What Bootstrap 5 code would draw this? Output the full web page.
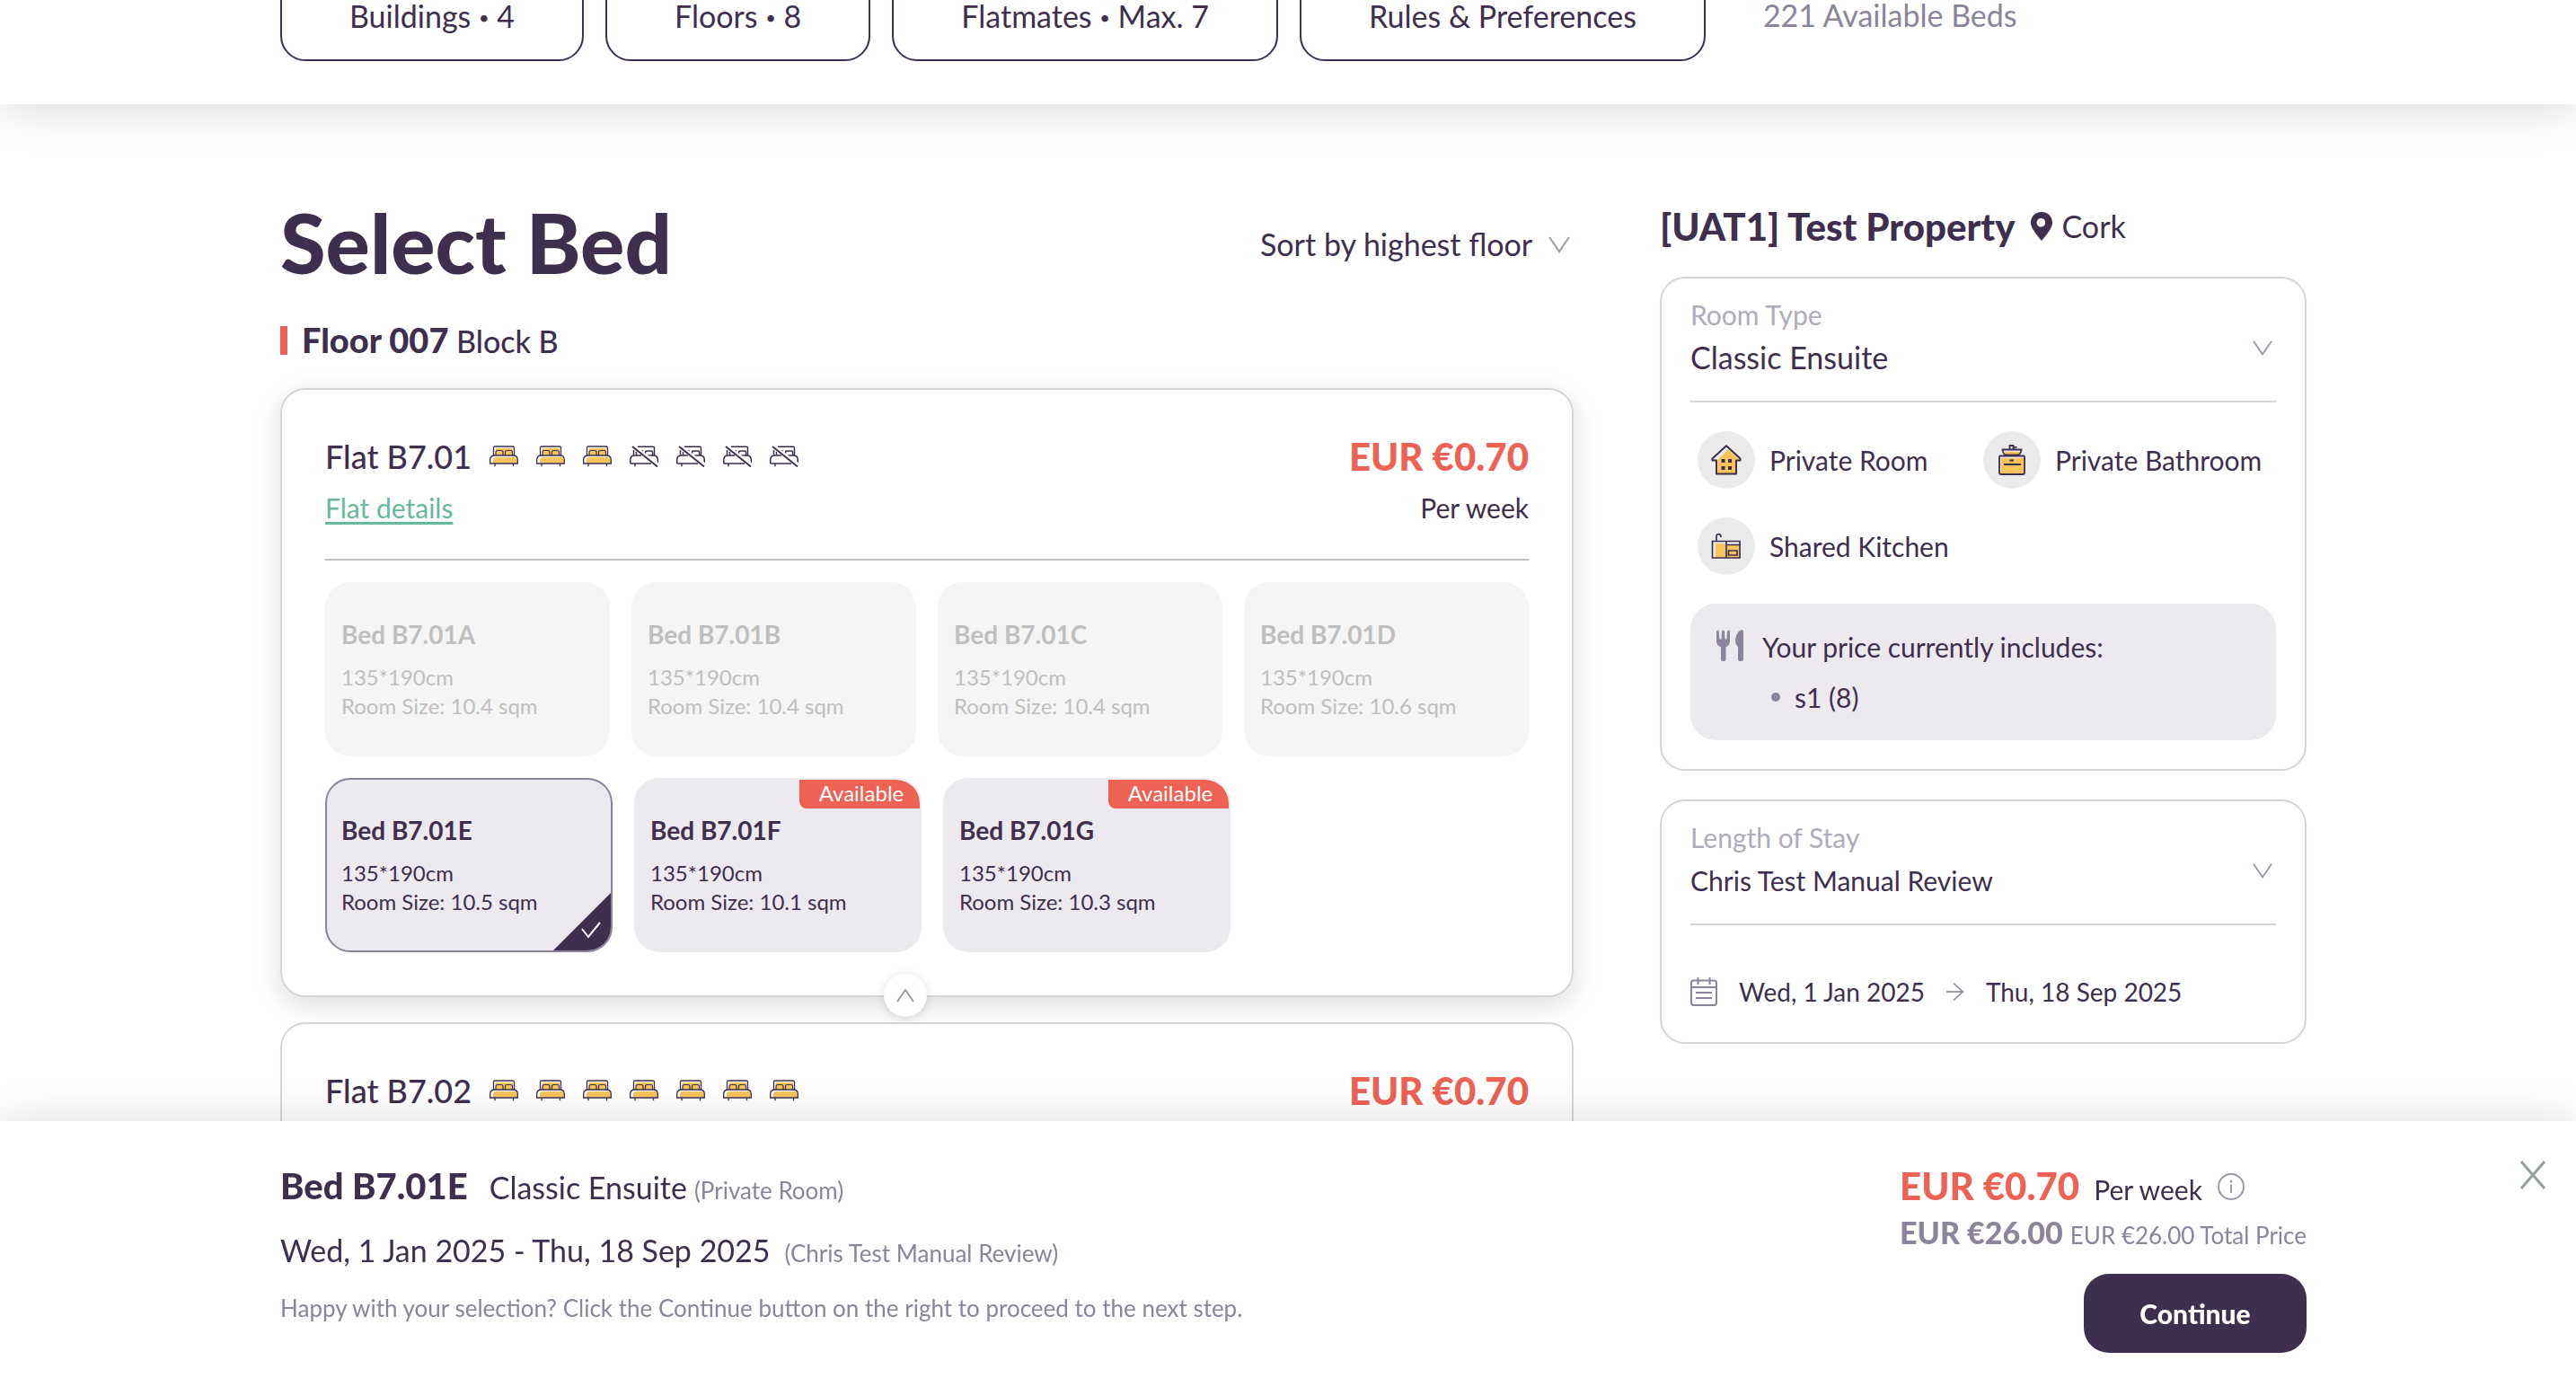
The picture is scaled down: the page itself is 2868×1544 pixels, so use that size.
<!DOCTYPE html>
<html lang="en">
<head>
<meta charset="utf-8">
<meta name="viewport" content="width=device-width, initial-scale=1">
<title>Select Bed</title>
<link href="https://cdn.jsdelivr.net/npm/bootstrap@5.3.0/dist/css/bootstrap.min.css" rel="stylesheet">
<style>
  :root { --ink: #3e2f4f; --muted: #8b849a; --faint: #b0abb8; --line: #d6d5dc; --coral: #ed6254; --lilac: #eceaee; --green: #66b99d; }
  body { font-family: Lato, "Liberation Sans", sans-serif; color: var(--ink); background: #fff; font-size: 30px; line-height: 40px; }
  h1, h2, h3, p { margin: 0; line-height: inherit; }
  button, select, label { color: inherit; }
  .gutters { padding-left: 312px; padding-right: 300px; }

  .filter-bar { padding-bottom: 48px; box-shadow: 0 0 56px rgba(0, 0, 0, .18); font-size: 34px; }
  .filter-row { margin-top: -34px; gap: 24px; }
  .filter-btn { height: 102px; padding: 0 75px; border: 2px solid var(--ink); border-radius: 28px; font-size: 34px; color: var(--ink); }
  .pip { font-size: 20px; vertical-align: 4px; }
  .beds-left { padding-left: 40px; color: var(--muted); }

  .page-body { padding-top: 106px; gap: 96px; }
  .side-col { flex: 0 0 720px; padding-top: 6px; }
  .page-title { font-size: 92px; line-height: 96px; font-weight: 900; }
  .heavy { font-weight: 900; }
  .plain-select { appearance: none; border: 0; background: none; padding: 0; color: var(--ink); outline-offset: 4px; }
  .t-34 { font-size: 34px; }
  .t-28 { font-size: 28px; }
  .t-26 { font-size: 26px; line-height: 32px; }
  .t-40 { font-size: 40px; line-height: 48px; }
  .t-42 { font-size: 42px; line-height: 48px; }
  .ink-muted { color: var(--muted); }
  .ink-faint { color: var(--faint); }
  .ink-coral { color: var(--coral); }

  .floor-head { margin: 41px 0 33px; gap: 16px; height: 40px; }
  .floor-mark { width: 8px; height: 32px; background: var(--coral); }
  .t-36 { font-size: 36px; }
  .t-38 { font-size: 38px; }

  .panel { border: 2px solid var(--line); border-radius: 28px; background: #fff; }
  .flat-panel { padding: 50px 48px 48px; margin-bottom: 28px; position: relative; }
  .flat-panel.is-open { box-shadow: 0 8px 32px rgba(0, 0, 0, .14); }
  .flat-top { gap: 20px; line-height: 48px; }
  .flat-sub { margin: 13px 0 37px; }
  .green-link, .green-link:hover { color: var(--green); text-underline-offset: 4px; }
  .rule { height: 2px; margin: 0; border: 0; opacity: 1; background: var(--line); }
  .rule-dark { background: #c1c0c6; margin-bottom: 24px; }
  .bed-row { gap: 24px; }
  .bed-row + .bed-row { margin-top: 24px; }
  .bed-tile { position: relative; flex: 1 1 0; min-height: 194px; padding: 38px 16px 0; border: 2px solid transparent; border-radius: 28px; background: var(--lilac); text-align: left; font-size: 24px; line-height: 32px; overflow: hidden; display: flex; flex-direction: column; }
  .bed-tile strong { font-size: 28px; line-height: 36px; margin-bottom: 14px; }
  .bed-tile:disabled { background: #f5f5f5; color: #bfbfbf; }
  .bed-tile.open-tile { flex: 0 0 320px; }
  .bed-tile.picked { border-color: var(--muted); }
  .picked-corner { position: absolute; right: 0; bottom: 0; }
  .tile-tag { position: absolute; right: 0; top: 0; width: 134px; height: 32px; line-height: 30px; padding-left: 4px; border-radius: 0 26px 0 8px; background: var(--coral); color: #fff; text-align: center; }
  .fold-btn { position: absolute; left: calc(50% - 48px); bottom: -24px; width: 48px; height: 48px; padding: 0; border: 0; border-radius: 50%; background: #fff; box-shadow: 0 2px 12px rgba(0, 0, 0, .15); }

  .side-title { margin-bottom: 32px; }
  .side-panel { padding: 20px 32px 32px; }
  .side-panel + .side-panel { margin-top: 32px; padding-bottom: 36px; }
  .picker { padding: 0 4px 24px 0; }
  .picker label { margin-bottom: 4px; display: block; }
  .picker select { line-height: 48px; height: 48px; width: 100%; }
  .feature-grid { padding: 32px 8px; row-gap: 32px; }
  .feature { gap: 16px; width: 50%; white-space: nowrap; }
  .feature-dot { width: 64px; height: 64px; border-radius: 50%; background: #ebebec; }
  .price-box { border-radius: 28px; background: var(--lilac); padding: 28px; gap: 20px; }
  .price-list li { gap: 16px; padding-left: 10px; margin-top: 16px; }
  .price-list li::before { content: ""; width: 10px; height: 10px; border-radius: 50%; background: var(--muted); }
  .dates { margin-top: 54px; }

  .summary-bar { background: #fff; padding-top: 48px; padding-bottom: 38px; box-shadow: 0 0 48px rgba(0, 0, 0, .14); }
  .stack-24 { gap: 24px; }
  .stay-line { line-height: 48px; }
  .per-week { line-height: 32px; }
  .continue-btn { width: 248px; height: 88px; margin-top: 18px; border-radius: 28px; background: var(--ink); color: #fff; font-size: 30px; font-weight: 900; }
  .continue-btn:hover { background: #55446a; color: #fff; }
  .close-btn { position: absolute; right: 32px; top: 44px; padding: 0; border: 0; background: none; line-height: 0; }
  svg { display: block; flex: none; }
</style>
</head>
<body>
<svg width="0" height="0" class="position-absolute" aria-hidden="true">
  <symbol id="bed" viewBox="0 0 32 24">
    <path d="M4.5 11V2.500Q4.500 1 6 1H26Q27.500 1 27.500 2.500V11" fill="#fff" stroke="#3e2f4f" stroke-width="1.300"/>
    <path d="M7 3H26V11H7Z" fill="#f6c458"/>
    <path d="M7 11V7.500Q7 5.500 9 5.500H13Q15 5.500 15 7.500V11M17.500 11V7.500Q17.500 5.500 19.500 5.500H23.500Q25.500 5.500 25.500 7.500V11" fill="#f6c458" stroke="#3e2f4f" stroke-width="1.200"/>
    <path d="M.7 20V15.500C1 12.500 3 11 5.500 11H26.500C29 11 31 12.500 31.300 15.500V20Z" fill="#fff"/>
    <path d="M4 19.500V16Q4 13.500 7 13H29Q31 14 31 16V19.500Z" fill="#f6c458"/>
    <path d="M.7 20V15.500C1 12.500 3 11 5.500 11H26.500C29 11 31 12.500 31.300 15.500V20ZM6 20V23.200M26.500 20V23.200" fill="none" stroke="#3e2f4f" stroke-width="1.300"/>
  </symbol>
  <symbol id="nobed" viewBox="0 0 32 24">
    <path d="M4.500 11V5M9 1.200H26Q27.500 1.200 27.500 2.500V11M7.500 11V7M17.500 9V7.500Q17.500 6 19.500 6H23.500Q25.500 6 25.500 7.500V11M12 6H15M.8 20V15.500C1 12.500 3 11 5.500 11H13M20 11H26.500C29 11 31 12.500 31.300 15.500V20M.8 20H24M6 20V23.200" fill="none" stroke="#3e2f4f" stroke-width="1.500"/>
    <path d="M5 .5 32 20.500" stroke="#fff" stroke-width="2"/>
    <path d="M3 1 31 23.500" stroke="#3e2f4f" stroke-width="1.900"/>
  </symbol>
  <symbol id="down" viewBox="0 0 24 24"><path d="M1 4 12 20 23 4" fill="none" stroke="#9d97a9" stroke-width="2"/></symbol>
</svg>

<header class="filter-bar gutters">
  <div class="filter-row d-flex align-items-center">
    <button type="button" class="btn filter-btn">Buildings <span class="pip">•</span> 4</button>
    <button type="button" class="btn filter-btn">Floors <span class="pip">•</span> 8</button>
    <button type="button" class="btn filter-btn">Flatmates <span class="pip">•</span> Max. 7</button>
    <button type="button" class="btn filter-btn">Rules &amp; Preferences</button>
    <span class="beds-left">221 Available Beds</span>
  </div>
</header>

<main class="page-body gutters d-flex align-items-start">
  <section class="flex-fill">
    <div class="d-flex justify-content-between align-items-center">
      <h1 class="page-title">Select Bed</h1>
      <div class="d-flex align-items-center gap-3 pe-1 pt-1">
        <select class="plain-select t-34" aria-label="Sort beds"><option>Sort by highest floor</option></select>
        <svg width="24" height="24"><use href="#down"/></svg>
      </div>
    </div>

    <div class="floor-head d-flex align-items-center">
      <span class="floor-mark"></span>
      <h2 class="t-34"><strong class="t-38 heavy">Floor 007</strong> Block B</h2>
    </div>

    <article class="panel flat-panel is-open">
      <div class="flat-top d-flex align-items-center">
        <h3 class="t-36">Flat B7.01</h3>
        <svg width="32" height="24"><use href="#bed"/></svg>
        <svg width="32" height="24"><use href="#bed"/></svg>
        <svg width="32" height="24"><use href="#bed"/></svg>
        <svg width="32" height="24"><use href="#nobed"/></svg>
        <svg width="32" height="24"><use href="#nobed"/></svg>
        <svg width="32" height="24"><use href="#nobed"/></svg>
        <svg width="32" height="24"><use href="#nobed"/></svg>
        <strong class="t-42 heavy ink-coral ms-auto">EUR €0.70</strong>
      </div>
      <div class="flat-sub d-flex justify-content-between">
        <a href="#" class="green-link">Flat details</a>
        <span>Per week</span>
      </div>
      <hr class="rule rule-dark">
      <div class="bed-row d-flex">
        <button type="button" class="bed-tile" disabled><strong>Bed B7.01A</strong><span>135*190cm</span><span>Room Size: 10.4 sqm</span></button>
        <button type="button" class="bed-tile" disabled><strong>Bed B7.01B</strong><span>135*190cm</span><span>Room Size: 10.4 sqm</span></button>
        <button type="button" class="bed-tile" disabled><strong>Bed B7.01C</strong><span>135*190cm</span><span>Room Size: 10.4 sqm</span></button>
        <button type="button" class="bed-tile" disabled><strong>Bed B7.01D</strong><span>135*190cm</span><span>Room Size: 10.6 sqm</span></button>
      </div>
      <div class="bed-row d-flex">
        <button type="button" class="bed-tile open-tile picked" aria-pressed="true"><strong>Bed B7.01E</strong><span>135*190cm</span><span>Room Size: 10.5 sqm</span>
          <svg class="picked-corner" width="64" height="64" viewBox="0 0 64 64"><path d="M64 0V64H0Z" fill="#3e2f4f"/><path d="M32 40 39 49 52 33" fill="none" stroke="#fff" stroke-width="2"/></svg>
        </button>
        <button type="button" class="bed-tile open-tile"><strong>Bed B7.01F</strong><span>135*190cm</span><span>Room Size: 10.1 sqm</span><span class="tile-tag">Available</span></button>
        <button type="button" class="bed-tile open-tile"><strong>Bed B7.01G</strong><span>135*190cm</span><span>Room Size: 10.3 sqm</span><span class="tile-tag">Available</span></button>
      </div>
      <button type="button" class="fold-btn d-flex align-items-center justify-content-center" aria-label="Collapse flat">
        <svg width="22" height="16" viewBox="0 0 22 16"><path d="M2 15 11 2 20 15" fill="none" stroke="#9d97a9" stroke-width="2"/></svg>
      </button>
    </article>

    <article class="panel flat-panel">
      <div class="flat-top d-flex align-items-center">
        <h3 class="t-36">Flat B7.02</h3>
        <svg width="32" height="24"><use href="#bed"/></svg>
        <svg width="32" height="24"><use href="#bed"/></svg>
        <svg width="32" height="24"><use href="#bed"/></svg>
        <svg width="32" height="24"><use href="#bed"/></svg>
        <svg width="32" height="24"><use href="#bed"/></svg>
        <svg width="32" height="24"><use href="#bed"/></svg>
        <svg width="32" height="24"><use href="#bed"/></svg>
        <strong class="t-42 heavy ink-coral ms-auto">EUR €0.70</strong>
      </div>
    </article>
  </section>

  <aside class="side-col">
    <div class="side-title d-flex align-items-center">
      <h2 class="t-42 heavy">[UAT1] Test Property</h2>
      <svg class="ms-3 me-2" width="28" height="32" viewBox="0 0 28 32"><path d="M14 0C6.500 0 2 5.200 2 12 2 18 9 26 14 32 19 26 26 18 26 12 26 5.200 21.500 0 14 0ZM14 16.500A4.800 4.800 0 1 1 14 7 4.800 4.800 0 0 1 14 16.500Z" fill="#3e2f4f"/></svg>
      <span class="t-34">Cork</span>
    </div>

    <section class="panel side-panel">
      <div class="picker d-flex align-items-end">
        <div class="flex-fill">
          <label for="roomType" class="ink-faint">Room Type</label>
          <select id="roomType" class="plain-select t-34"><option>Classic Ensuite</option></select>
        </div>
        <svg class="mb-4" width="22" height="22"><use href="#down"/></svg>
      </div>
      <hr class="rule">
      <div class="feature-grid d-flex flex-wrap">
        <div class="feature d-flex align-items-center">
          <span class="feature-dot d-flex align-items-center justify-content-center">
            <svg width="34" height="34" viewBox="0 0 34 34"><path d="M17 1 1.500 15.500V17.500H6V33H28V17.500H32.500V15.500Z" fill="#ebebec"/><path d="M19 5 7.500 17V32.500H27.500V17.500H32Z" fill="#f6c458"/><path d="M17 1.200 1.500 15.500V17.500H6V32.500H28V17.500H32.500V15.500Z" fill="none" stroke="#3e2f4f" stroke-width="2" stroke-linejoin="round"/><path d="M11.500 16H15.500V20H11.500ZM19 16H23V20H19ZM11.500 24H15.500V28H11.500ZM19 24H23V28H19Z" fill="#3e2f4f"/></svg>
          </span>
          <span>Private Room</span>
        </div>
        <div class="feature d-flex align-items-center">
          <span class="feature-dot d-flex align-items-center justify-content-center">
            <svg width="32" height="34" viewBox="0 0 32 34"><path d="M4 15H30V32H4Z" fill="#f6c458"/><path d="M8 8H26L23 11H9Z" fill="#f6c458"/><path d="M3 12.500H29Q30 12.500 30 14V31Q30 33 28 33H4Q2 33 2 31V14Q2 12.500 3 12.500ZM5.500 5.500H26.500Q26 11 22 11.500H10Q6 11 5.500 5.500ZM13.500 5V1H17.500V5M17.500 2.800H21.500M7 22H26M13.500 17.500H18" fill="none" stroke="#3e2f4f" stroke-width="1.800"/></svg>
          </span>
          <span>Private Bathroom</span>
        </div>
        <div class="feature d-flex align-items-center">
          <span class="feature-dot d-flex align-items-center justify-content-center">
            <svg width="34" height="30" viewBox="0 0 34 30"><path d="M5 12H16V28H5ZM18 14H31V28H18Z" fill="#f6c458"/><path d="M1.500 9.500H32V28H1.500ZM17 9.500V28M17 13.500H32M19.500 20H29V25H19.500ZM6 9V4Q6 1.500 8.500 1.500T11 5" fill="none" stroke="#3e2f4f" stroke-width="1.700"/></svg>
          </span>
          <span>Shared Kitchen</span>
        </div>
      </div>
      <div class="price-box d-flex align-items-start">
        <svg width="32" height="38" viewBox="0 0 32 38"><path d="M1 3Q1 1.500 2.300 1.500T3.800 3L4.300 11.500H6.500L7 3Q7 1.500 8.500 1.500T10 3L10.500 11.500H12.500L13 3Q13.200 1.500 14.500 1.500T16 3V14Q16 18 11.500 20.500V34Q11.500 36 8.700 36T6 34V20.500Q1 18 1 14ZM31 3Q31 1 29 1.200C25 2 22 8 22 14Q22 17 25 20.500V34Q25 36 28 36T31 34Z" fill="#8b849a"/></svg>
        <div>
          <p>Your price currently includes:</p>
          <ul class="price-list list-unstyled mb-0"><li class="d-flex align-items-center">s1 (8)</li></ul>
        </div>
      </div>
    </section>

    <section class="panel side-panel">
      <div class="picker d-flex align-items-end">
        <div class="flex-fill">
          <label for="stay" class="ink-faint">Length of Stay</label>
          <select id="stay" class="plain-select"><option>Chris Test Manual Review</option></select>
        </div>
        <svg class="mb-4" width="22" height="22"><use href="#down"/></svg>
      </div>
      <hr class="rule">
      <div class="dates d-flex align-items-center t-28">
        <svg class="me-4" width="30" height="32" viewBox="0 0 30 32"><path d="M4 3.500H26Q29 3.500 29 6V28Q29 31 26 31H4Q1 31 1 28V6Q1 3.500 4 3.500ZM1 11H29M8.500 0V8M21.500 0V8M6 17H24M6 23H24" fill="none" stroke="#8b849a" stroke-width="2"/></svg>
        <span>Wed, 1 Jan 2025</span>
        <svg class="mx-4" width="20" height="20" viewBox="0 0 20 20"><path d="M0 10H18M8 .5 18.500 10 8 19.500" fill="none" stroke="#9d97a9" stroke-width="1.800"/></svg>
        <span>Thu, 18 Sep 2025</span>
      </div>
    </section>
  </aside>
</main>

<footer class="summary-bar gutters fixed-bottom d-flex justify-content-between align-items-start">
  <div class="d-flex flex-column stack-24">
    <div class="d-flex align-items-baseline">
      <strong class="t-40 heavy me-4">Bed B7.01E</strong>
      <span class="t-34 me-2">Classic Ensuite</span>
      <span class="t-26 ink-muted">(Private Room)</span>
    </div>
    <div class="stay-line d-flex align-items-baseline gap-3 t-34">
      <span>Wed, 1 Jan 2025 - Thu, 18 Sep 2025</span>
      <span class="t-26 ink-muted">(Chris Test Manual Review)</span>
    </div>
    <p class="t-26 ink-muted">Happy with your selection? Click the Continue button on the right to proceed to the next step.</p>
  </div>
  <div class="d-flex flex-column gap-2">
    <div class="d-flex align-items-baseline">
      <strong class="t-42 heavy ink-coral me-3">EUR €0.70</strong>
      <span class="per-week me-3">Per week</span>
      <svg class="align-self-center" width="32" height="32" viewBox="0 0 32 32"><circle cx="16" cy="17" r="14" fill="none" stroke="#9d97a9" stroke-width="2"/><path d="M16 14.500V24" stroke="#9d97a9" stroke-width="2"/><circle cx="16" cy="11" r="1.500" fill="#9d97a9"/></svg>
    </div>
    <div class="d-flex align-items-baseline gap-2 ink-muted">
      <strong class="t-34 heavy">EUR €26.00</strong>
      <span class="t-26">EUR €26.00 Total Price</span>
    </div>
    <button type="button" class="btn continue-btn align-self-end">Continue</button>
  </div>
  <button type="button" class="close-btn" aria-label="Close">
    <svg width="32" height="32" viewBox="0 0 32 32"><path d="M3 1 29 31M29 1 3 31" stroke="#97a09f" stroke-width="3"/></svg>
  </button>
</footer>
<script src="https://cdn.jsdelivr.net/npm/bootstrap@5.3.0/dist/js/bootstrap.bundle.min.js"></script>
</body>
</html>
